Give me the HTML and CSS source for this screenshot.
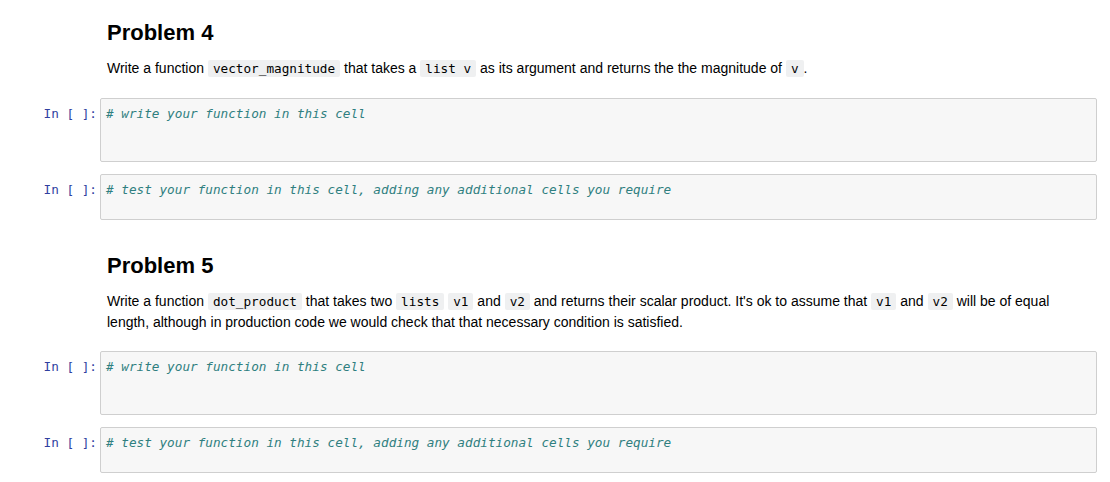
FILE: index.html
```html
<!DOCTYPE html>
<html>
<head>
<meta charset="utf-8">
<link rel="stylesheet" href="styles.css">
</head>
<body>
<div class="notebook">
  <div class="cell md first">
    <div class="prompt"></div>
    <div class="md-body">
      <h2>Problem 4</h2>
      <p>Write a function <code>vector_magnitude</code> that takes a <code>list v</code> as its argument and returns the the magnitude of <code>v</code>.</p>
    </div>
  </div>
  <div class="cell code gap-md">
    <div class="prompt">In&nbsp;[&nbsp;]:</div>
    <div class="input lines-3"><pre><span class="comment"># write your function in this cell</span></pre></div>
  </div>
  <div class="cell code gap-code">
    <div class="prompt">In&nbsp;[&nbsp;]:</div>
    <div class="input lines-2"><pre><span class="comment"># test your function in this cell, adding any additional cells you require</span></pre></div>
  </div>
  <div class="cell md second">
    <div class="prompt"></div>
    <div class="md-body">
      <h2>Problem 5</h2>
      <p>Write a function <code>dot_product</code> that takes two <code>lists</code> <code>v1</code> and <code>v2</code> and returns their scalar product. It's ok to assume that <code>v1</code> and <code>v2</code> will be of equal length, although in production code we would check that that necessary condition is satisfied.</p>
    </div>
  </div>
  <div class="cell code gap-md">
    <div class="prompt">In&nbsp;[&nbsp;]:</div>
    <div class="input lines-3"><pre><span class="comment"># write your function in this cell</span></pre></div>
  </div>
  <div class="cell code gap-code">
    <div class="prompt">In&nbsp;[&nbsp;]:</div>
    <div class="input lines-2"><pre><span class="comment"># test your function in this cell, adding any additional cells you require</span></pre></div>
  </div>
</div>
</body>
</html>
```

FILE: styles.css
```css
html, body {
  margin: 0;
  padding: 0;
  background: #ffffff;
}

body {
  font-family: "Liberation Sans", Arial, sans-serif;
  color: #000000;
  width: 1110px;
  height: 482px;
  overflow: hidden;
}

.notebook {
  padding: 0 13px 0 0;
}

.cell {
  display: flex;
  align-items: flex-start;
}

.prompt {
  flex: 0 0 100px;
  box-sizing: border-box;
  padding-right: 3px;
  text-align: right;
  font-family: "DejaVu Sans Mono", "Liberation Mono", monospace;
  font-size: 12.7px;
  line-height: 17px;
  color: #303f9f;
  white-space: nowrap;
}

.code .prompt {
  padding-top: 7px;
}

.md-body {
  flex: 1;
  padding-left: 7px;
  padding-right: 12px;
}

.first {
  padding-top: 20px;
}

.second {
  padding-top: 33px;
}

h2 {
  margin: 0;
  font-size: 22px;
  line-height: 26px;
  font-weight: 700;
}

p {
  margin: 12px 0 0 0;
  font-size: 14px;
  line-height: 20px;
  color: #000000;
}

code {
  font-family: "DejaVu Sans Mono", "Liberation Mono", monospace;
  font-size: 12.7px;
  background: #eff0f1;
  padding: 1px 5px;
  border-radius: 2px;
}

.gap-md {
  margin-top: 19px;
}

.gap-code {
  margin-top: 12px;
}

.input {
  flex: 1;
  background: #f7f7f7;
  border: 1px solid #cfcfcf;
  border-radius: 2px;
  padding: 6px 5px 4px 5px;
}

.lines-3 {
  min-height: 52px;
}

.lines-2 {
  min-height: 34px;
}

pre {
  margin: 0;
  font-family: "DejaVu Sans Mono", "Liberation Mono", monospace;
  font-size: 12.7px;
  line-height: 17px;
}

.comment {
  color: #2f7f80;
  font-style: italic;
}
```
